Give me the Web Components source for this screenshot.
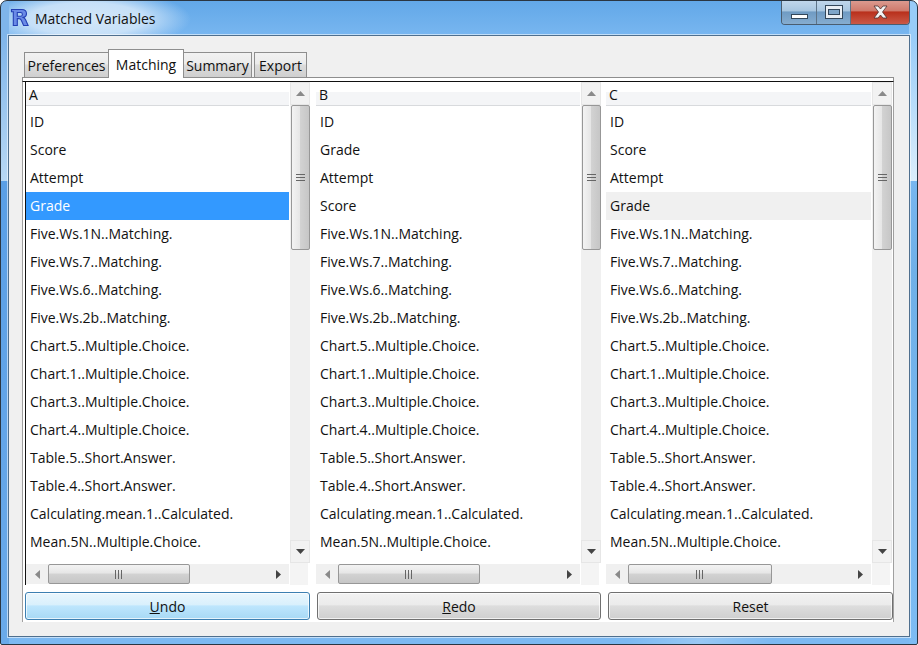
<!DOCTYPE html>
<html>
<head>
<meta charset="utf-8">
<title>Matched Variables</title>
<style>
  html, body { margin: 0; padding: 0; width: 918px; height: 645px; overflow: hidden; background: #fff; }
  body { font-family: "Open Sans", Roboto, sans-serif; }
</style>
</head>
<body>
<win-window title="Matched Variables">
  <tab-bar tabs="Preferences,Matching,Summary,Export" active="1"></tab-bar>
  <var-column slot="columns" label="A" order="ID,Score,Attempt,Grade" selected="3" sel="active" style="box-shadow:-1px 0 0 #111"></var-column>
  <var-column slot="columns" label="B" order="ID,Grade,Attempt,Score" style="margin-left:1px"></var-column>
  <var-column slot="columns" label="C" order="ID,Score,Attempt,Grade" selected="3" sel="soft" thumb="144"></var-column>
  <win-button slot="buttons" variant="hot"><u>U</u>ndo</win-button>
  <win-button slot="buttons"><u>R</u>edo</win-button>
  <win-button slot="buttons">Reset</win-button>
</win-window>

<script>
const UI_FONT = '14px "Open Sans", Roboto, sans-serif';

class WinWindow extends HTMLElement {
  constructor() {
    super();
    this.attachShadow({ mode: 'open' });
  }
  connectedCallback() {
    const title = this.getAttribute('title') || '';
    this.shadowRoot.innerHTML = `
      <style>
        :host {
          display: flex;
          flex-direction: column;
          box-sizing: border-box;
          width: 918px;
          height: 645px;
          position: relative;
          border: 1px solid #2a3642;
          border-radius: 7px 7px 2px 2px;
          background:
            linear-gradient(180deg, #7fb5ea 34px, #b8d8f4 180px, #5a9fe6 180px, #6aaaea 100%) left top / 8px 100% no-repeat,
            linear-gradient(180deg, #98ccf8 34px, #dbeefc 180px, #78b6f0 180px, #6fb0e8 270px, #7dbcf4 100%) right top / 8px 100% no-repeat,
            radial-gradient(ellipse 105px 30px at 85px 18px, #d3e7f9 0, #c6e0f8 55%, rgba(195,223,248,0) 100%),
            linear-gradient(115deg, rgba(255,255,255,0) 0 76%, rgba(255,255,255,.22) 82%, rgba(255,255,255,0) 88%),
            linear-gradient(180deg, #62a8e8 0, #78b6f0 34px, #7cb9f2 100%);
          overflow: hidden;
        }
        .title {
          display: flex;
          align-items: center;
          height: 34px;
          padding-left: 8px;
          flex: none;
          font: ${UI_FONT};
          color: #101010;
        }
        .title svg { margin-right: 6px; flex: none; }
        .controls {
          position: absolute;
          top: -1px;
          right: 7px;
          display: flex;
          height: 24px;
          border: 1px solid #4a5d70;
          border-top: 0;
          border-radius: 0 0 4px 4px;
          overflow: hidden;
        }
        .controls div {
          display: flex;
          align-items: center;
          justify-content: center;
          height: 100%;
          background: linear-gradient(180deg, #c2d8ec 0, #a8c6e0 45%, #6f9bc3 50%, #86add0 100%);
        }
        .min { width: 34px; border-right: 1px solid #5d7388; }
        .max { width: 33px; border-right: 1px solid #5d7388; }
        .close { width: 58px; background: linear-gradient(180deg, #dc9d92 0, #cf7a6c 45%, #b9301c 50%, #cb5947 100%) !important; }
        .client {
          flex: 1;
          display: flex;
          flex-direction: column;
          margin: 0 7px 7px 7px;
          padding: 14px 15px 14px 13px;
          background: #f0f0f0;
          border: 1px solid #4f6f8e;
          box-shadow: 0 0 0 1px rgba(255,255,255,.55);
          min-height: 0;
        }
        .panel {
          flex: 1;
          min-height: 0;
          display: flex;
          flex-direction: column;
          background: #fff;
          border: 1px solid #a0a0a0;
          border-top: 0;
          border-bottom: 0;
        }
        .rule { height: 3px; background: #fff; border: 1px solid #8e8e8e; border-bottom-color: #111; margin: 0 -1px; flex: none; }
        .columns {
          display: grid;
          grid-template-columns: 284px 286px 286px;
          column-gap: 5px;
          padding-left: 3px;
          height: 503px;
          flex: none;
        }
        .buttons {
          display: grid;
          grid-template-columns: 285px 284px 285px;
          column-gap: 7px;
          padding: 7px 0 0 2px;
        }
      </style>
      <div class="title">
        <svg width="20" height="20" viewBox="0 0 20 20">
          <path d="M2.500 1.500h10.300c3 0 4.700 1.600 4.700 4.200 0 2-1.200 3.300-3.100 3.700 1.100.5 1.700 1.300 2.300 2.600l2.400 5.500h-4.500l-2.300-5.200c-.6-1.200-1.100-1.700-2.300-1.700H8.300v6.900H4.300V3.700H2.500zM8.300 4.500v3.800h3.200c1.200 0 1.900-.7 1.900-1.900s-.7-1.900-1.900-1.900z" fill="#6a8ae6" stroke="#2340b4" stroke-width="1.100"/>
        </svg>
        <span>${title}</span>
      </div>
      <div class="controls">
        <div class="min"><svg width="17" height="6" viewBox="0 0 17 6" style="margin-top:9px"><rect x=".5" y=".5" width="16" height="4" fill="#fff" stroke="#33475a"/></svg></div>
        <div class="max"><svg width="18" height="14" viewBox="0 0 18 14"><rect x=".5" y=".5" width="17" height="13" fill="#e8eef4" stroke="#33475a"/><rect x="3.500" y="4.500" width="11" height="5" fill="#7fa6c9" stroke="#33475a"/></svg></div>
        <div class="close"><svg width="15" height="14" viewBox="0 0 15 14"><path d="M1 1h4l2.500 3L10 1h4L9.500 7l4.500 6h-4L7.500 10 5 13H1l4.500-6z" fill="#f4f4f4" stroke="#4a3030" stroke-width=".8"/></svg></div>
      </div>
      <div class="client">
        <slot></slot>
        <div class="panel">
          <div class="rule"></div>
          <div class="columns"><slot name="columns"></slot></div>
          <div class="buttons"><slot name="buttons"></slot></div>
        </div>
      </div>
    `;
  }
}

class TabBar extends HTMLElement {
  constructor() {
    super();
    this.attachShadow({ mode: 'open' });
  }
  connectedCallback() {
    const tabs = (this.getAttribute('tabs') || '').split(',');
    const active = Number(this.getAttribute('active') || 0);
    const widths = [85, 76, 69, 53];
    const gaps = [-1, -1, 2, 0];
    this.shadowRoot.innerHTML = `
      <style>
        :host { display: flex; align-items: flex-end; height: 27px; padding-left: 2px; flex: none; font: ${UI_FONT}; color: #111; }
        .tab {
          box-sizing: border-box;
          height: 25px;
          border: 1px solid #8e8e8e;
          border-bottom: 0;
          display: flex;
          align-items: center;
          justify-content: center;
          background: linear-gradient(180deg, #f2f2f2 0, #ebebeb 45%, #dcdcdc 50%, #cfcfcf 100%);
        }
        .tab.on { height: 29px; background: #fff; position: relative; margin-bottom: -1px; z-index: 1; }
      </style>
      ${tabs.map((t, i) => `<div class="tab ${i === active ? 'on' : ''}" style="width:${widths[i]}px;margin-right:${gaps[i]}px">${t}</div>`).join('')}
    `;
  }
}

const REST = [
  'Five.Ws.1N..Matching.', 'Five.Ws.7..Matching.', 'Five.Ws.6..Matching.', 'Five.Ws.2b..Matching.',
  'Chart.5..Multiple.Choice.', 'Chart.1..Multiple.Choice.', 'Chart.3..Multiple.Choice.', 'Chart.4..Multiple.Choice.',
  'Table.5..Short.Answer.', 'Table.4..Short.Answer.', 'Calculating.mean.1..Calculated.', 'Mean.5N..Multiple.Choice.'
];

class VarColumn extends HTMLElement {
  constructor() {
    super();
    this.attachShadow({ mode: 'open' });
  }
  connectedCallback() {
    const label = this.getAttribute('label') || '';
    const order = (this.getAttribute('order') || '').split(',');
    const selected = Number(this.getAttribute('selected') ?? -1);
    const sel = this.getAttribute('sel') || '';
    const thumb = this.getAttribute('thumb') || '142';
    const items = order.concat(REST);
    this.shadowRoot.innerHTML = `
      <style>
        :host { display: grid; grid-template-columns: 1fr 20px; grid-template-rows: 1fr 22px; min-width: 0; min-height: 0; font: ${UI_FONT}; color: #111; }
        .list { background: #fff; overflow: hidden; margin-right: 1px; }
        .head { height: 24px; box-sizing: border-box; padding: 5px 0 0 3px; margin-bottom: 2px; border-bottom: 1px solid #d8dadd; background: linear-gradient(180deg, #fff 0 10px, #f4f5f7 10px); line-height: 16px; }
        .row { height: 28px; line-height: 28px; padding-left: 4px; white-space: nowrap; }
        .row.active { background: #3399ff; color: #fff; }
        .row.soft { background: #f0f0f0; }
        .corner { background: #f4f4f4; margin-right: 2px; }
      </style>
      <div class="list">
        <div class="head">${label}</div>
        ${items.map((t, i) => `<div class="row ${i === selected ? sel : ''}">${t}</div>`).join('')}
      </div>
      <scroll-bar orient="v"></scroll-bar>
      <scroll-bar orient="h" thumb="${thumb}"></scroll-bar>
      <div class="corner"></div>
    `;
  }
}

class ScrollBar extends HTMLElement {
  constructor() {
    super();
    this.attachShadow({ mode: 'open' });
  }
  connectedCallback() {
    const v = this.getAttribute('orient') === 'v';
    const gradient = v ? '90deg' : '180deg';
    const thumb = this.getAttribute('thumb') || '142';
    this.shadowRoot.innerHTML = `
      <style>
        :host { display: flex; box-sizing: border-box; background: #f0f0f0; flex-direction: ${v ? 'column' : 'row'}; align-items: ${v ? 'center' : 'stretch'}; ${v ? '' : 'margin: 1px 1px 1px 0;'} min-width: 0; min-height: 0; }
        .arrow { flex: none; display: flex; align-items: center; justify-content: center; box-sizing: border-box; ${v ? 'height: 23px; width: 100%; border: 1px solid #e6e6e6; background: #f2f2f2;' : 'width: 22px;'} }
        .thumb {
          flex: none;
          box-sizing: border-box;
          ${v ? 'width: 19px; height: 145px;' : `width: ${thumb}px; margin: 0;`}
          border: 1px solid #979797;
          border-radius: 2px;
          background: linear-gradient(${gradient}, #f3f3f3 0, #e6e6e6 45%, #d2d2d2 50%, #c6c6c6 100%);
          display: flex;
          align-items: center;
          justify-content: center;
        }
        .fill { flex: 1; }
      </style>
      <div class="arrow">
        ${v ? '<svg width="9" height="5"><path d="M4.500 0L9 5H0z" fill="#8a8a8a"/></svg>'
            : '<svg width="5" height="9"><path d="M0 4.500L5 0v9z" fill="#8a8a8a"/></svg>'}
      </div>
      <div class="thumb">
        ${v ? '<svg width="9" height="8"><path d="M0 .5h9M0 3.500h9M0 6.500h9" stroke="#666" stroke-width="1"/></svg>'
            : '<svg width="8" height="9"><path d="M.5 0v9M3.500 0v9M6.500 0v9" stroke="#666" stroke-width="1"/></svg>'}
      </div>
      <div class="fill"></div>
      <div class="arrow">
        ${v ? '<svg width="9" height="5"><path d="M0 0h9L4.500 5z" fill="#444"/></svg>'
            : '<svg width="5" height="9"><path d="M0 0l5 4.500L0 9z" fill="#444"/></svg>'}
      </div>
    `;
  }
}

class WinButton extends HTMLElement {
  constructor() {
    super();
    this.attachShadow({ mode: 'open' });
  }
  connectedCallback() {
    const hot = this.getAttribute('variant') === 'hot';
    this.shadowRoot.innerHTML = `
      <style>
        :host {
          display: flex;
          box-sizing: border-box;
          height: 28px;
          align-items: center;
          justify-content: center;
          border-radius: 3px;
          border: 1px solid ${hot ? '#3c7fb1' : '#707070'};
          background: ${hot
            ? 'linear-gradient(180deg, #eaf6fd 0, #d9f0fc 45%, #bee6fd 50%, #a7d9f5 100%)'
            : 'linear-gradient(180deg, #f2f2f2 0, #ebebeb 45%, #dddddd 50%, #cfcfcf 100%)'};
          box-shadow: inset 0 0 0 1px rgba(255,255,255,.7);
          font: ${UI_FONT};
          color: #111;
        }
      </style>
      <slot></slot>
    `;
  }
}

customElements.define('win-window', WinWindow);
customElements.define('tab-bar', TabBar);
customElements.define('var-column', VarColumn);
customElements.define('scroll-bar', ScrollBar);
customElements.define('win-button', WinButton);
</script>
</body>
</html>
